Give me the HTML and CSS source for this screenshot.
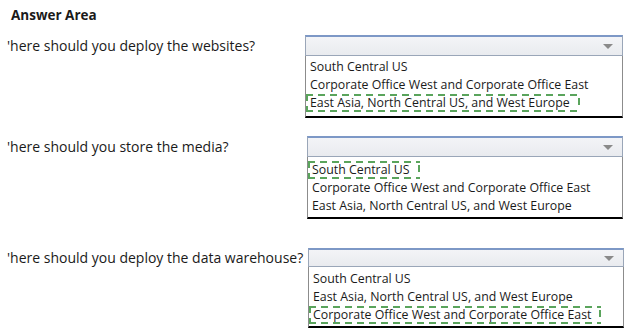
FILE: index.html
```html
<!DOCTYPE html>
<html>
<head>
<meta charset="utf-8">
<link rel="stylesheet" href="styles.css">
</head>
<body>
<div class="page">
  <div class="title">Answer Area</div>
  <div class="row row1">
    <div class="question">'here should you deploy the websites?</div>
    <div class="dropdown">
      <div class="select"><span class="arrow"></span></div>
      <ul class="list">
        <li>South Central US</li>
        <li>Corporate Office West and Corporate Office East</li>
        <li><span class="pick">East Asia, North Central US, and West Europe</span></li>
      </ul>
    </div>
  </div>
  <div class="row row2">
    <div class="question">'here should you store the media?</div>
    <div class="dropdown">
      <div class="select"><span class="arrow"></span></div>
      <ul class="list">
        <li><span class="pick">South Central US</span></li>
        <li>Corporate Office West and Corporate Office East</li>
        <li>East Asia, North Central US, and West Europe</li>
      </ul>
    </div>
  </div>
  <div class="row row3">
    <div class="question">'here should you deploy the data warehouse?</div>
    <div class="dropdown">
      <div class="select"><span class="arrow"></span></div>
      <ul class="list">
        <li>South Central US</li>
        <li>East Asia, North Central US, and West Europe</li>
        <li><span class="pick">Corporate Office West and Corporate Office East</span></li>
      </ul>
    </div>
  </div>
</div>
</body>
</html>
```
FILE: styles.css
```css
html, body {
  margin: 0;
  padding: 0;
  background: #ffffff;
}
body {
  font-family: "Open Sans", "Noto Sans", "DejaVu Sans", sans-serif;
  color: #1a1a1a;
}
.page {
  width: 634px;
  height: 331px;
  overflow: hidden;
}
.title {
  font-weight: 700;
  font-size: 13.5px;
  padding: 6px 0 0 11px;
  height: 23px;
  line-height: 18px;
}
.row {
  display: flex;
  align-items: flex-start;
}
.row1 { margin-top: 6px; }
.row2 { margin-top: 18px; }
.row3 { margin-top: 29px; }
.question {
  font-size: 14px;
  padding-left: 7px;
  padding-top: 2px;
  line-height: 18px;
  width: 298px;
  flex: none;
}
.row2 .question { width: 300px; }
.row3 .question { width: 301px; padding-top: 1px; }
.dropdown {
  width: 318px;
  flex: none;
}
.row2 .dropdown { width: 316px; }
.row3 .dropdown { width: 316px; }
.select {
  height: 18px;
  border: 1px solid #9aa6b8;
  border-top: 2px solid #7d98c6;
  background: linear-gradient(#f3f4f7, #e9ebef);
  position: relative;
}
.row3 .select { height: 16px; }
.arrow {
  position: absolute;
  right: 9px;
  top: 7px;
  width: 0;
  height: 0;
  border-left: 5px solid transparent;
  border-right: 5px solid transparent;
  border-top: 5px solid #8a8a8a;
}
.row3 .arrow { top: 6px; }
.list {
  list-style: none;
  margin: 0;
  padding: 2px 0 4px 0;
  border-left: 1px solid #8c8c8c;
  border-right: 1px solid #8c8c8c;
  border-bottom: 2px solid #000000;
  font-size: 12.35px;
}
.row2 .list { padding: 4px 0 2px 0; }
.row3 .list { padding: 3px 0 2px 0; }
.list li {
  height: 18px;
  line-height: 18px;
  padding-left: 4px;
  white-space: nowrap;
}
.pick {
  display: inline-block;
  margin-left: -4px;
  padding: 2px 10px 2px 4px;
  line-height: 14px;
  background:
    repeating-linear-gradient(90deg, #5aa45c 0 7px, transparent 7px 12px) top left / 100% 2px no-repeat,
    repeating-linear-gradient(90deg, #5aa45c 0 7px, transparent 7px 12px) bottom left / 100% 2px no-repeat,
    repeating-linear-gradient(180deg, #5aa45c 0 7px, transparent 7px 12px) top left / 2px 100% no-repeat,
    repeating-linear-gradient(180deg, transparent 0 4px, #5aa45c 4px 11px, transparent 11px 18px) top right / 2px 100% no-repeat;
}
```
